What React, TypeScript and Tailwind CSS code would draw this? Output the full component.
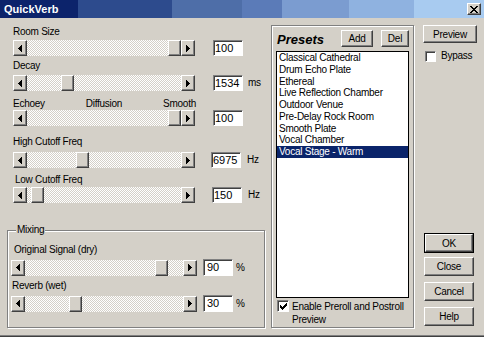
import React from "react";

const raised =
  "bg-[#d4d0c8] border border-t-white border-l-white border-r-[#404040] border-b-[#404040] shadow-[inset_-1px_-1px_0_#808080]";
const sunken =
  "bg-white border border-t-[#808080] border-l-[#808080] border-r-white border-b-white shadow-[inset_1px_1px_0_#404040]";
const etched = "border border-[#808080] shadow-[inset_1px_1px_0_#ffffff,1px_1px_0_#ffffff]";

const presets = [
  "Classical Cathedral",
  "Drum Echo Plate",
  "Ethereal",
  "Live Reflection Chamber",
  "Outdoor Venue",
  "Pre-Delay Rock Room",
  "Smooth Plate",
  "Vocal Chamber",
  "Vocal Stage - Warm",
];

function ArrowLeft() {
  return (
    <svg width="4" height="7" viewBox="0 0 4 7" shapeRendering="crispEdges">
      <path d="M3 0h1v7H3zM2 1h1v5H2zM1 2h1v3H1zM0 3h1v1H0z" fill="#000" />
    </svg>
  );
}

function ArrowRight() {
  return (
    <svg width="4" height="7" viewBox="0 0 4 7" shapeRendering="crispEdges">
      <path d="M0 0h1v7H0zM1 1h1v5H1zM2 2h1v3H2zM3 3h1v1H3z" fill="#000" />
    </svg>
  );
}

function ScrollBar({ className, thumb }: { className: string; thumb: number }) {
  return (
    <div className={`flex h-[16px] shrink-0 ${className}`}>
      <div className={`${raised} w-[14px] h-full flex items-center justify-center shrink-0`}>
        <ArrowLeft />
      </div>
      <div className="relative flex-1 h-full bg-[image:repeating-conic-gradient(#d4d0c8_0_25%,#ffffff_0_50%)] bg-[length:2px_2px]">
        <div className={`${raised} absolute top-0 h-full w-[13px]`} style={{ left: thumb }} />
      </div>
      <div className={`${raised} w-[14px] h-full flex items-center justify-center shrink-0`}>
        <ArrowRight />
      </div>
    </div>
  );
}

function ValueBox({ value, className }: { value: string; className: string }) {
  return (
    <div className={`${sunken} w-[30px] text-[11px] leading-[14px] tracking-normal shrink-0 overflow-hidden ${className}`}>
      {value}
    </div>
  );
}

function Check({ checked, className }: { checked?: boolean; className: string }) {
  return (
    <div className={`${sunken} shrink-0 flex items-center justify-center ${className}`}>
      {checked && (
        <svg width="7" height="7" viewBox="0 0 7 7" shapeRendering="crispEdges">
          <path
            d="M6 0h1v1H6zM5 1h2v1H5zM0 2h1v1H0zM4 2h3v1H4zM0 3h2v1H0zM3 3h3v1H3zM0 4h5v1H0zM1 5h3v1H1zM2 6h1v1H2z"
            fill="#000"
          />
        </svg>
      )}
    </div>
  );
}

function TitleBar() {
  return (
    <div className="h-[18px] shrink-0 flex items-center justify-between bg-[linear-gradient(to_right,#0c236b_0_78px,#2d4b8d_78px_172px,#4e6ea8_172px_242px,#5b7bb8_242px_282px,#7b9cd0_282px_349px,#8fb2e0_349px_414px,#a8cbf0_414px)]">
      <span className="pl-[4px] text-[11px] leading-[18px] font-bold text-white tracking-normal">QuickVerb</span>
      <div className={`${raised} w-[14px] h-[12px] mr-[3px] flex items-center justify-center`}>
        <svg width="8" height="7" viewBox="0 0 8 7" shapeRendering="crispEdges">
          <path
            d="M0 0h2v1H0zM6 0h2v1H6zM1 1h2v1H1zM5 1h2v1H5zM2 2h4v1H2zM3 3h2v1H3zM2 4h4v1H2zM1 5h2v1H1zM5 5h2v1H5zM0 6h2v1H0zM6 6h2v1H6z"
            fill="#000"
          />
        </svg>
      </div>
    </div>
  );
}

function LeftColumn() {
  return (
    <div className="w-[265px] shrink-0 flex flex-col pl-[7px] pt-[8px]">
      <div className="ml-[6px] leading-[12px]">Room Size</div>
      <div className="ml-[6px] mt-[2px] flex items-center">
        <ScrollBar className="w-[182px]" thumb={141} />
        <ValueBox value="100" className="ml-[18px] h-[16px] pl-[1px]" />
      </div>

      <div className="ml-[6px] mt-[4px] leading-[12px]">Decay</div>
      <div className="ml-[6px] mt-[3px] flex items-center">
        <ScrollBar className="w-[182px]" thumb={34} />
        <ValueBox value="1534" className="ml-[18px] h-[16px] pl-[1px]" />
        <span className="ml-[5px] leading-[12px]">ms</span>
      </div>

      <div className="ml-[6px] mt-[7px] w-[183px] flex justify-between leading-[12px]">
        <span>Echoey</span>
        <span>Diffusion</span>
        <span>Smooth</span>
      </div>
      <div className="ml-[6px] flex items-center">
        <ScrollBar className="w-[182px]" thumb={141} />
        <ValueBox value="100" className="ml-[18px] h-[16px] pl-[1px]" />
      </div>

      <div className="ml-[6px] mt-[10px] leading-[12px]">High Cutoff Freq</div>
      <div className="ml-[6px] mt-[4px] flex items-center">
        <ScrollBar className="w-[182px]" thumb={49} />
        <ValueBox value="6975" className="ml-[16px] h-[16px] pl-[1px]" />
        <span className="ml-[6px] leading-[12px]">Hz</span>
      </div>

      <div className="ml-[8px] mt-[6px] leading-[12px]">Low Cutoff Freq</div>
      <div className="ml-[6px] mt-[1px] flex items-center">
        <ScrollBar className="w-[182px]" thumb={4} />
        <ValueBox value="150" className="ml-[17px] h-[16px] pl-[1px]" />
        <span className="ml-[6px] leading-[12px]">Hz</span>
      </div>

      <div className={`${etched} relative mt-[27px] w-[258px] h-[98px] pl-[3px] pt-[13px] flex flex-col`}>
        <span className="absolute left-[8px] top-[-7px] px-[1px] bg-[#d4d0c8] leading-[12px]">Mixing</span>
        <div className="ml-[3px] leading-[12px]">Original Signal (dry)</div>
        <div className="mt-[3px] flex items-center">
          <ScrollBar className="w-[186px]" thumb={130} />
          <ValueBox value="90" className="ml-[6px] h-[17px] pl-[3px]" />
          <span className="ml-[3px] leading-[12px]">%</span>
        </div>
        <div className="ml-[1px] mt-[4px] leading-[12px]">Reverb (wet)</div>
        <div className="mt-[3px] flex items-center">
          <ScrollBar className="w-[186px]" thumb={44} />
          <ValueBox value="30" className="ml-[6px] h-[17px] pl-[3px]" />
          <span className="ml-[3px] leading-[12px]">%</span>
        </div>
      </div>
    </div>
  );
}

function Presets() {
  return (
    <div className={`${etched} ml-[6px] mt-[7px] w-[143px] h-[303px] shrink-0 flex flex-col px-[4px] pt-[4px] overflow-hidden`}>
      <div className="flex items-start h-[17px]">
        <span className="ml-[1px] mt-[2px] text-[13px] leading-[16px] font-bold italic tracking-normal">Presets</span>
        <button className={`${raised} ml-auto w-[32px] h-[17px] flex items-center justify-center`}>Add</button>
        <button className={`${raised} ml-[8px] w-[28px] h-[17px] flex items-center justify-center`}>Del</button>
      </div>
      <div className="mt-[4px] h-[247px] shrink-0 bg-white border border-black">
        {presets.map((p, i) => (
          <div
            key={p}
            className={`h-[11.75px] leading-[11.75px] pl-[2px] whitespace-nowrap ${
              i === presets.length - 1 ? "bg-[#0a246a] text-white" : ""
            }`}
          >
            {p}
          </div>
        ))}
      </div>
      <div className="mt-[2px] flex items-start">
        <Check checked className="ml-[1px] w-[12px] h-[12px]" />
        <span className="ml-[3px] w-[117px] leading-[13px]">Enable Preroll and Postroll Preview</span>
      </div>
    </div>
  );
}

function RightColumn() {
  return (
    <div className="ml-[9px] mt-[7px] w-[54px] shrink-0 flex flex-col">
      <button className={`${raised} w-[54px] h-[18px] flex items-center justify-center`}>Preview</button>
      <div className="mt-[7px] ml-[2px] flex items-center">
        <Check className="w-[11px] h-[11px]" />
        <span className="ml-[5px] leading-[12px]">Bypass</span>
      </div>
      <div className="mt-[171px] ml-[1px] w-[50px] h-[20px] border border-black">
        <button className={`${raised} w-full h-full flex items-center justify-center`}>OK</button>
      </div>
      <button className={`${raised} mt-[4px] ml-[1px] w-[50px] h-[19px] flex items-center justify-center`}>Close</button>
      <button className={`${raised} mt-[6px] ml-[1px] w-[50px] h-[19px] flex items-center justify-center`}>Cancel</button>
      <button className={`${raised} mt-[6px] ml-[1px] w-[50px] h-[19px] flex items-center justify-center`}>Help</button>
    </div>
  );
}

export default function App() {
  return (
    <div className="w-[484px] h-[337px] overflow-hidden bg-[#d4d0c8] flex flex-col font-['Liberation_Sans',Arial,sans-serif] text-[10px] tracking-[-0.25px] text-black border-b border-b-[#404040] shadow-[inset_0_-1px_0_#808080]">
      <TitleBar />
      <div className="flex flex-1 min-h-0">
        <LeftColumn />
        <Presets />
        <RightColumn />
      </div>
    </div>
  );
}
